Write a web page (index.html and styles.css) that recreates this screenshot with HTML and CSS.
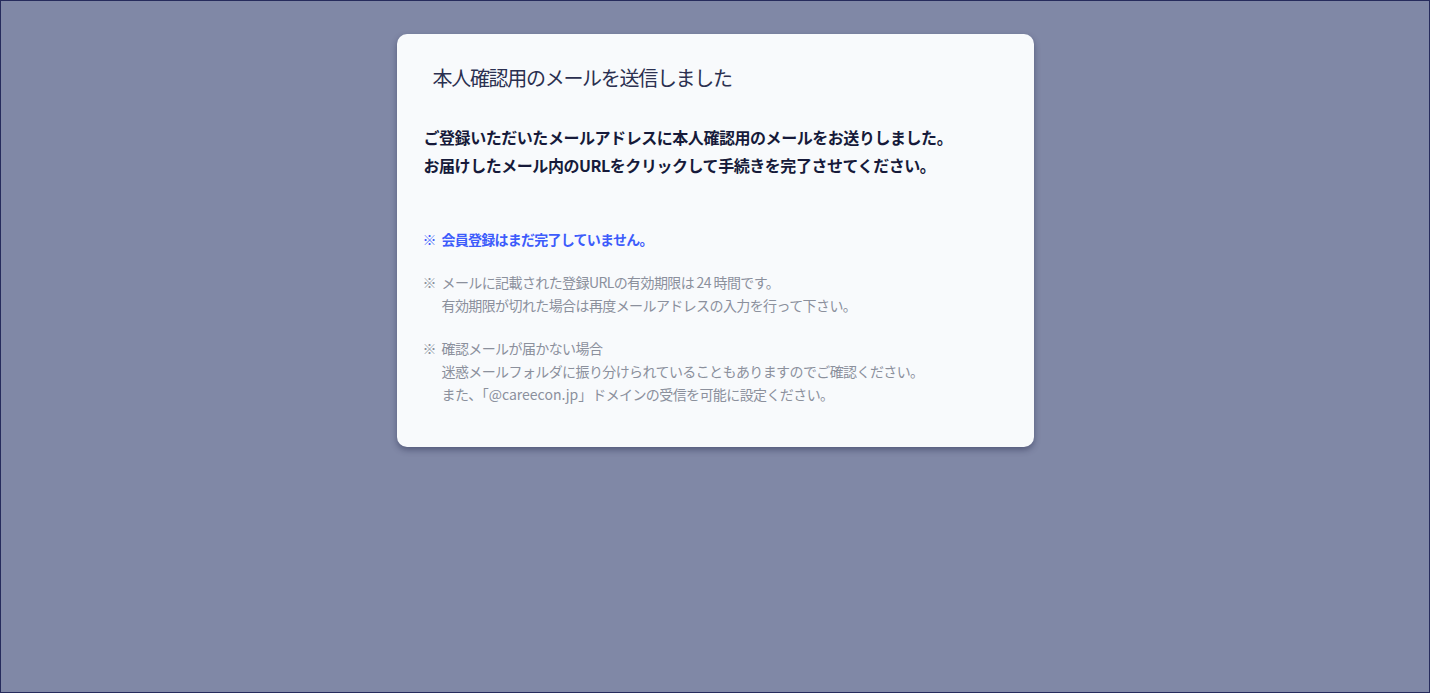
FILE: index.html
```html
<!DOCTYPE html>
<html lang="ja">
<head>
<meta charset="utf-8">
<title>本人確認用のメールを送信しました</title>
<link rel="stylesheet" href="styles.css">
</head>
<body>
<div class="page">
  <div class="card">
    <h1 class="title">本人確認用のメールを送信しました</h1>
    <p class="lead">ご登録いただいたメールアドレスに本人確認用のメールをお送りしました。<br>お届けしたメール内のURLをクリックして手続きを完了させてください。</p>
    <div class="note note-blue"><span class="mark">※</span><span class="body">会員登録はまだ完了していません。</span></div>
    <div class="note note-gray"><span class="mark">※</span><span class="body">メールに記載された登録URLの有効期限は 24 時間です。<br>有効期限が切れた場合は再度メールアドレスの入力を行って下さい。</span></div>
    <div class="note note-gray"><span class="mark">※</span><span class="body">確認メールが届かない場合<br>迷惑メールフォルダに振り分けられていることもありますのでご確認ください。<br>また、<span class="bracket">「@careecon.jp」</span>ドメインの受信を可能に設定ください。</span></div>
  </div>
</div>
</body>
</html>
```

FILE: styles.css
```css
html, body {
  margin: 0;
  padding: 0;
  height: 100%;
}
body {
  font-family: "Noto Sans CJK JP", "Noto Sans", sans-serif;
  background: #8088a6;
}
.page {
  box-sizing: border-box;
  height: 693px;
  border: 1px solid #262b5c;
  display: flex;
  justify-content: center;
  align-items: flex-start;
  padding-top: 33px;
}
.card {
  box-sizing: border-box;
  width: 637px;
  height: 413px;
  background: #f8fafc;
  border-radius: 10px;
  box-shadow: 0 3px 6px rgba(30, 35, 70, 0.45);
  padding: 26px 27px 0 27px;
}
.title {
  margin: 0 0 0 9px;
  font-size: 20px;
  font-weight: 400;
  line-height: 36px;
  color: #2b3050;
  letter-spacing: -1.3px;
}
.lead {
  margin: 27px 0 0 0;
  font-size: 16px;
  font-weight: 700;
  line-height: 28px;
  color: #161a3a;
  letter-spacing: -0.45px;
}
.note {
  display: flex;
  font-size: 14px;
  line-height: 23px;
}
.mark {
  flex: 0 0 19px;
  margin-left: -1px;
  letter-spacing: 0;
}
.note .body {
  letter-spacing: -0.6px;
}
.note .bracket {
  letter-spacing: 0;
}
.note-blue {
  margin-top: 49px;
  color: #3d5cfb;
  font-weight: 700;
}
.note-blue .body {
  letter-spacing: -0.75px;
}
.note-gray {
  color: #8b909c;
}
.note-blue + .note-gray {
  margin-top: 20px;
}
.note-gray + .note-gray {
  margin-top: 20px;
}
```
